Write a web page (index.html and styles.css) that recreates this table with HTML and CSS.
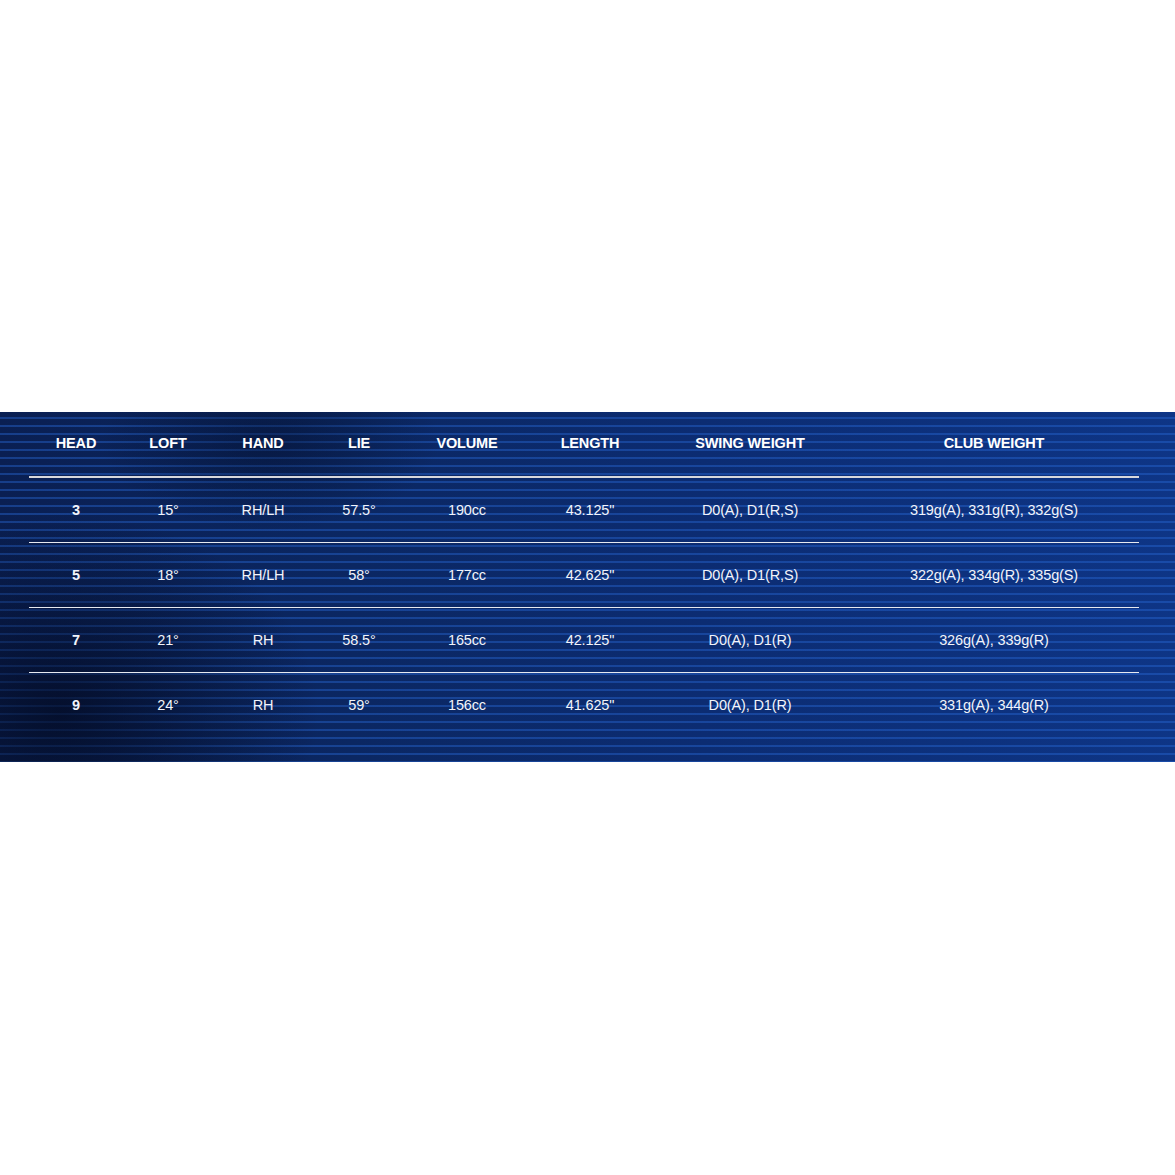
FILE: index.html
```html
<!DOCTYPE html>
<html lang="en">
<head>
<meta charset="utf-8">
<title>Specs</title>
<link rel="stylesheet" href="styles.css">
</head>
<body>
<section class="band">
  <div class="specs">
    <div class="row head">
      <div>HEAD</div><div>LOFT</div><div>HAND</div><div>LIE</div><div>VOLUME</div><div>LENGTH</div><div>SWING WEIGHT</div><div>CLUB WEIGHT</div>
    </div>
    <div class="row">
      <div class="b">3</div><div>15°</div><div>RH/LH</div><div>57.5°</div><div>190cc</div><div>43.125"</div><div>D0(A), D1(R,S)</div><div>319g(A), 331g(R), 332g(S)</div>
    </div>
    <div class="row">
      <div class="b">5</div><div>18°</div><div>RH/LH</div><div>58°</div><div>177cc</div><div>42.625"</div><div>D0(A), D1(R,S)</div><div>322g(A), 334g(R), 335g(S)</div>
    </div>
    <div class="row">
      <div class="b">7</div><div>21°</div><div>RH</div><div>58.5°</div><div>165cc</div><div>42.125"</div><div>D0(A), D1(R)</div><div>326g(A), 339g(R)</div>
    </div>
    <div class="row last">
      <div class="b">9</div><div>24°</div><div>RH</div><div>59°</div><div>156cc</div><div>41.625"</div><div>D0(A), D1(R)</div><div>331g(A), 344g(R)</div>
    </div>
  </div>
</section>
</body>
</html>
```

FILE: styles.css
```css
html, body {
  margin: 0;
  padding: 0;
  background: #ffffff;
}

body {
  width: 1175px;
  height: 1175px;
  font-family: "Liberation Sans", Arial, sans-serif;
}

.band {
  margin-top: 412px;
  height: 350px;
  box-sizing: border-box;
  padding: 0 36px 0 29px;
  background:
    radial-gradient(ellipse 260px 200px at 60px 300px, rgba(2, 8, 28, 0.7), rgba(2, 8, 28, 0) 100%),
    radial-gradient(ellipse 170px 90px at 270px 30px, rgba(2, 8, 28, 0.4), rgba(2, 8, 28, 0) 100%),
    repeating-linear-gradient(180deg,
      rgba(0, 0, 0, 0) 0px,
      rgba(0, 0, 0, 0) 5px,
      rgba(40, 105, 215, 0.42) 5px,
      rgba(40, 105, 215, 0.42) 7px,
      rgba(0, 0, 0, 0) 7px,
      rgba(0, 0, 0, 0) 8px),
    linear-gradient(90deg, #0a1f52 0%, #0b2762 30%, #0c2c72 60%, #0e3586 100%);
}

.specs {
  width: 1110px;
  color: #f2f4fa;
}

.row {
  display: grid;
  grid-template-columns: 94px 90px 100px 92px 124px 122px 198px 290px;
  height: 64px;
  align-items: center;
  border-bottom: 1px solid #e6e9f0;
  font-size: 14.5px;
  letter-spacing: -0.15px;
}

.row > div {
  text-align: center;
  white-space: nowrap;
}

.row.head {
  height: 66px;
  border-bottom: 2px solid #d8d8dc;
  font-weight: bold;
  color: #ffffff;
  padding-bottom: 3px;
  box-sizing: border-box;
}

.row.last {
  border-bottom: none;
}

.b {
  font-weight: bold;
}
```
